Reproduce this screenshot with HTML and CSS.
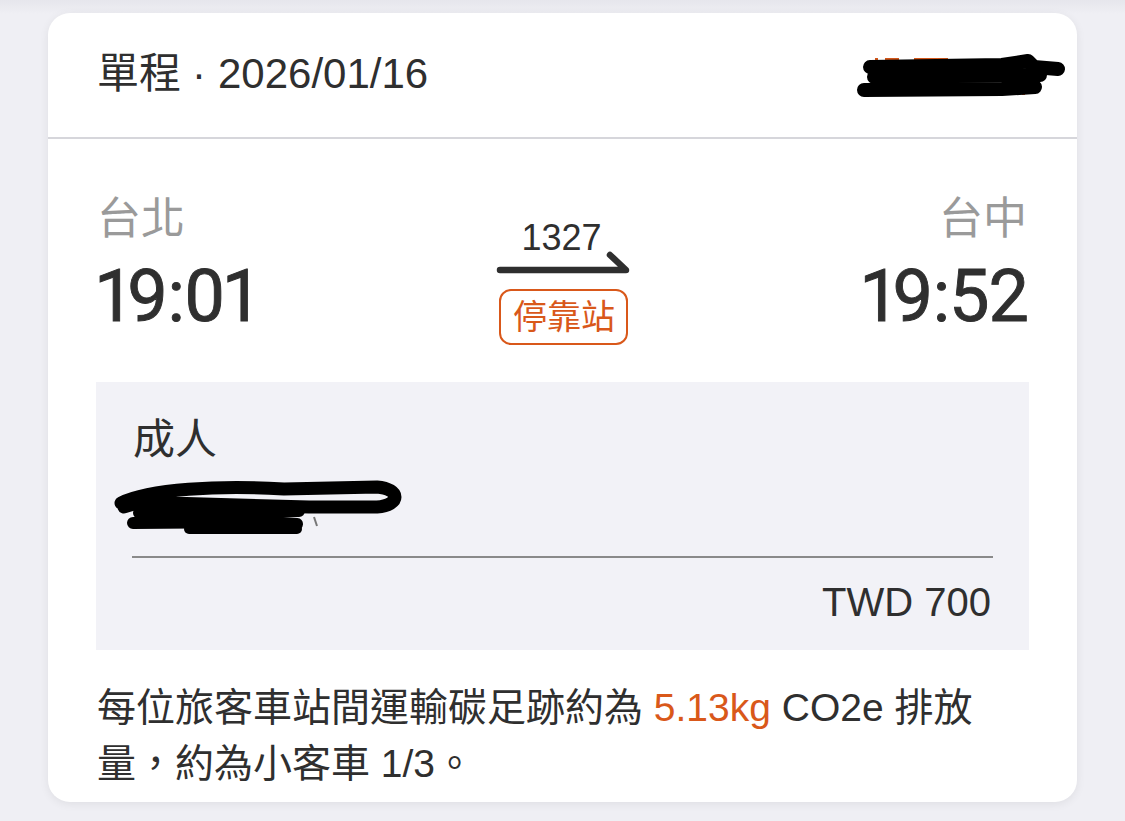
FILE: index.html
```html
<!DOCTYPE html>
<html lang="zh-Hant">
<head>
<meta charset="utf-8">
<title>單程</title>
<link rel="stylesheet" href="styles.css">
</head>
<body>
<div class="page">
  <div class="card">
    <div class="card-header">
      <div class="trip-title">單程<span class="dot">·</span>2026/01/16</div>
      <svg class="redact-top" width="215" height="48" viewBox="0 0 215 48">
        <g fill="#d2561a">
          <rect x="23" y="5" width="3" height="4"/>
          <rect x="33" y="5" width="14" height="4"/>
          <rect x="62" y="5" width="34" height="3"/>
          <rect x="170" y="36" width="3" height="6"/>
        </g>
        <g stroke="#000" stroke-linecap="round" stroke-linejoin="round" fill="none">
          <path d="M18 14 L150 12 L176 8 L182 14 L206 16" stroke-width="14"/>
          <path d="M22 24 L188 22" stroke-width="14"/>
          <path d="M12 37 L150 36 L183 34" stroke-width="14"/>
        </g>
      </svg>
    </div>

    <div class="route">
      <div class="station">
        <div class="station-name">台北</div>
        <div class="station-time">19:01</div>
      </div>
      <div class="train">
        <div class="train-no">1327</div>
        <svg class="train-arrow" width="136" height="26" viewBox="0 0 136 26">
          <path d="M4 20 L130 20 L114 5" stroke="#2f2f2f" stroke-width="6.5" fill="none" stroke-linecap="round" stroke-linejoin="round"/>
        </svg>
        <div class="badge">停靠站</div>
      </div>
      <div class="station station-end">
        <div class="station-name">台中</div>
        <div class="station-time">19:52</div>
      </div>
    </div>

    <div class="passenger">
      <div class="passenger-type">成人</div>
      <svg class="redact-name" width="300" height="64" viewBox="0 0 300 64">
        <g stroke="#000" stroke-linecap="round" stroke-linejoin="round" fill="none">
          <path d="M12 26 C 40 12, 110 8, 175 12 L 268 10 C 292 12, 292 28, 268 30 L 200 30 L 60 26 C 40 24, 25 26, 15 30" stroke-width="13"/>
          <path d="M30 36 L 190 34" stroke-width="12"/>
          <path d="M24 46 L 160 45 L 188 47" stroke-width="12"/>
          <path d="M80 52 L 188 52" stroke-width="10"/>
        </g>
        <path d="M205 40 L208 49" stroke="#777" stroke-width="2"/>
      </svg>
      <div class="divider"></div>
      <div class="price">TWD 700</div>
    </div>

    <p class="carbon">每位旅客車站間運輸碳足跡約為 <span class="accent">5.13kg</span> CO2e 排放量，約為小客車 1/3。</p>
  </div>
</div>
</body>
</html>
```

FILE: styles.css
```css
html, body {
  margin: 0;
  padding: 0;
}
body {
  background: #efeff4;
  font-family: "Liberation Sans", "Noto Sans CJK TC", sans-serif;
  color: #2f2f2f;
}
.page {
  width: 1125px;
  height: 821px;
  overflow: hidden;
  padding: 13px 0 0 48px;
  box-sizing: border-box;
  background: linear-gradient(#e6e6ec 0, #efeff4 14px);
}
.card {
  width: 1029px;
  background: #fff;
  border-radius: 22px;
  box-shadow: 0 2px 10px rgba(0, 0, 0, 0.07);
  padding: 0 48px 10px;
  box-sizing: border-box;
}
.card-header {
  height: 124px;
  display: flex;
  align-items: center;
  justify-content: space-between;
  border-bottom: 2px solid #d6d6db;
  margin: 0 -48px;
  padding: 0 48px 0 49px;
}
.trip-title {
  font-size: 42px;
  line-height: 48px;
  margin-top: -2px;
}
.dot {
  margin: 0 12px 0 11px;
}
.redact-top {
  display: block;
  margin-right: -38px;
  margin-top: 4px;
}
.route {
  display: flex;
  justify-content: space-between;
  align-items: flex-start;
  padding: 54px 0 37px 1px;
}
.station {
  display: flex;
  flex-direction: column;
}
.station-end {
  align-items: flex-end;
  margin-right: 2px;
}
.station-name {
  font-size: 44px;
  line-height: 52px;
  color: #9a9a9a;
}
.station-time {
  font-family: Roboto, "Liberation Sans", sans-serif;
  font-weight: 400;
  font-size: 72px;
  line-height: 72px;
  letter-spacing: -1px;
  font-variant-numeric: proportional-nums;
  -webkit-text-stroke: 0.9px #2f2f2f;
  margin-top: 16px;
}
.station-end .station-time {
  margin-right: -1px;
}
.train {
  display: flex;
  flex-direction: column;
  align-items: center;
  padding-top: 25px;
  margin-left: 10px;
}
.train-no {
  font-size: 36px;
  line-height: 40px;
  margin-left: -4px;
}
.train-arrow {
  display: block;
  margin-top: -8px;
}
.badge {
  margin-top: 13px;
  border: 2.5px solid #d9581a;
  border-radius: 12px;
  color: #d9581a;
  font-size: 34px;
  line-height: 46px;
  padding: 3px 11px 3px 12px;
}
.passenger {
  background: #f2f2f7;
  padding: 33px 36px 25px 37px;
}
.passenger-type {
  font-size: 42px;
  line-height: 50px;
}
.redact-name {
  display: block;
  margin: 12px 0 0 -24px;
}
.divider {
  height: 1.5px;
  background: #8a8a8a;
  margin-top: 15px;
  margin-left: -1px;
}
.price {
  text-align: right;
  font-size: 40px;
  line-height: 46px;
  margin-top: 21px;
  margin-right: 2px;
}
.carbon {
  margin: 30px 0 0 1px;
  font-size: 39px;
  line-height: 56px;
}
.accent {
  color: #d9581a;
}
```
